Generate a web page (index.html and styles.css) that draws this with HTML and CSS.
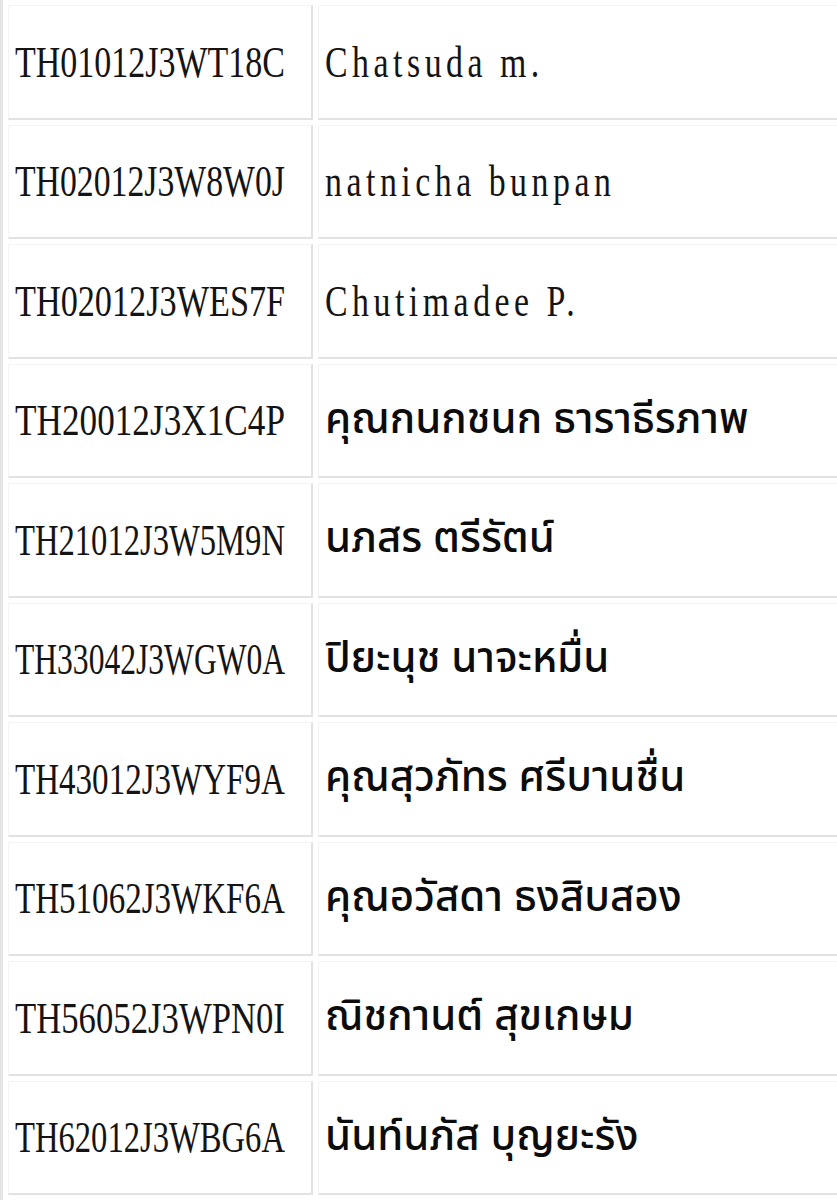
FILE: index.html
```html
<!DOCTYPE html>
<html lang="th">
<head>
<meta charset="utf-8">
<link rel="stylesheet" href="styles.css">
</head>
<body>
<div class="sheet">
<table class="grid">
<tr class="stub"><td class="code"></td><td class="name"></td></tr>
<tr><td class="code"><span class="id" style="--sx:0.944">TH01012J3WT18C</span></td><td class="name"><span class="latin">Chatsuda m.</span></td></tr>
<tr><td class="code"><span class="id" style="--sx:0.9375">TH02012J3W8W0J</span></td><td class="name"><span class="latin">natnicha bunpan</span></td></tr>
<tr><td class="code"><span class="id" style="--sx:0.951">TH02012J3WES7F</span></td><td class="name"><span class="latin">Chutimadee P.</span></td></tr>
<tr><td class="code"><span class="id" style="--sx:0.978">TH20012J3X1C4P</span></td><td class="name"><span class="thai">คุณกนกชนก ธาราธีรภาพ</span></td></tr>
<tr><td class="code"><span class="id" style="--sx:0.906">TH21012J3W5M9N</span></td><td class="name"><span class="thai">นภสร ตรีรัตน์</span></td></tr>
<tr><td class="code"><span class="id" style="--sx:0.877">TH33042J3WGW0A</span></td><td class="name"><span class="thai">ปิยะนุช นาจะหมื่น</span></td></tr>
<tr><td class="code"><span class="id" style="--sx:0.918">TH43012J3WYF9A</span></td><td class="name"><span class="thai">คุณสุวภัทร ศรีบานชื่น</span></td></tr>
<tr><td class="code"><span class="id" style="--sx:0.918">TH51062J3WKF6A</span></td><td class="name"><span class="thai">คุณอวัสดา ธงสิบสอง</span></td></tr>
<tr><td class="code"><span class="id" style="--sx:0.964">TH56052J3WPN0I</span></td><td class="name"><span class="thai">ณิชกานต์ สุขเกษม</span></td></tr>
<tr><td class="code"><span class="id" style="--sx:0.906">TH62012J3WBG6A</span></td><td class="name"><span class="thai">นันท์นภัส บุญยะรัง</span></td></tr>
</table>
</div>
</body>
</html>
```
FILE: styles.css
```css
html, body {
  margin: 0;
  padding: 0;
  background: #ffffff;
}
body {
  width: 837px;
  height: 1200px;
  overflow: hidden;
}
.sheet {
  border-left: 3px solid #e4e4e4;
  height: 1200px;
  overflow: hidden;
  display: flow-root;
}
.grid {
  border-collapse: separate;
  border-spacing: 5px 5px;
  margin-top: -119.5px;
  width: 880px;
  table-layout: fixed;
}
.grid td {
  height: 111.5px;
  padding: 0 0 0 6px;
  vertical-align: middle;
  border-top: 1px solid #f4f4f4;
  border-left: 1px solid #f4f4f4;
  border-right: 2px solid #e2e2e2;
  border-bottom: 2px solid #e2e2e2;
  color: #111;
  white-space: nowrap;
  font-family: "Liberation Serif", serif;
  font-size: 36px;
  line-height: 40px;
}
.grid td.code {
  width: 296px;
}
.id,
.latin {
  display: inline-block;
  font-family: "Liberation Serif", serif;
  font-size: 36px;
  line-height: 40px;
  transform: scale(var(--sx, 0.94), 1.24);
  transform-origin: left center;
  color: #141414;
}
.latin {
  letter-spacing: 4.8px;
}
.thai {
  display: inline-block;
  font-family: "Noto Sans Thai", "Noto Sans", sans-serif;
  font-size: 42px;
  line-height: 40px;
  font-weight: 500;
  color: #0c0c0c;
}
```
